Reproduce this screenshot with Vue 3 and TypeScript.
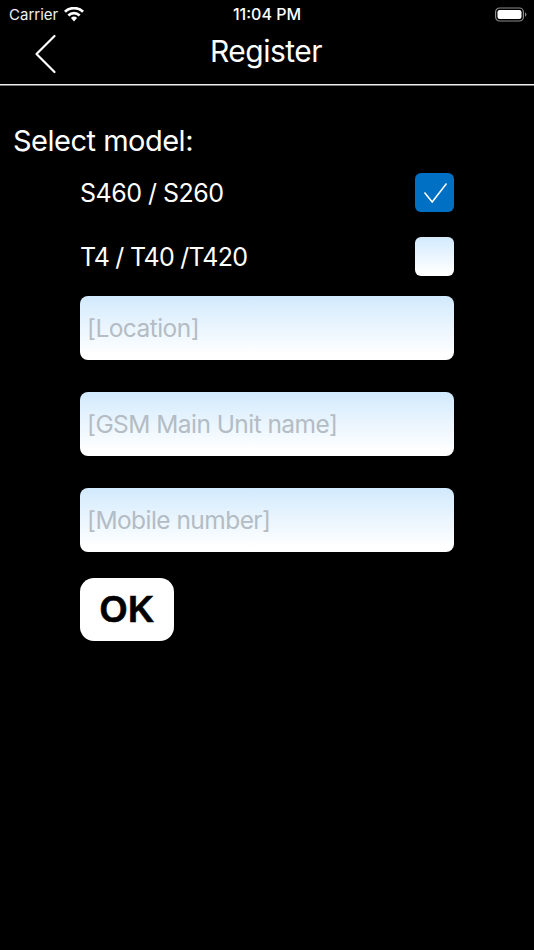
<script setup lang="ts">
const fields: string[] = ['[Location]', '[GSM Main Unit name]', '[Mobile number]']
</script>

<template>
  <div class="screen">
    <div class="status">
      <div class="status-left">
        <span class="carrier">Carrier</span>
        <svg class="wifi" width="20" height="15" viewBox="0 0 20 15">
          <path d="M10 14.4 L6.9 11 A4.6 4.6 0 0 1 13.1 11 Z" fill="#fff" />
          <path d="M5.3 9.4 L3.4 7.4 A9.6 9.6 0 0 1 16.6 7.4 L14.7 9.4 A6.9 6.9 0 0 0 5.3 9.4 Z" fill="#fff" />
          <path d="M1.9 5.8 L0 3.8 A14.4 14.4 0 0 1 20 3.8 L18.1 5.8 A11.7 11.7 0 0 0 1.9 5.8 Z" fill="#fff" />
        </svg>
      </div>
      <span class="time">11:04 PM</span>
      <svg class="battery" width="32" height="15" viewBox="0 0 32 15">
        <rect x="0.6" y="1" width="27.8" height="13" rx="4" fill="none" stroke="#8a8a8a" stroke-width="1.2" />
        <rect x="2.5" y="3" width="24" height="9" rx="2.2" fill="#fff" />
        <path d="M30 5.5 C31 5.8 31.4 6.5 31.4 7.5 C31.4 8.5 31 9.2 30 9.5 Z" fill="#8a8a8a" />
      </svg>
    </div>

    <header class="nav">
      <svg class="back" width="24" height="40" viewBox="0 0 24 40">
        <path d="M21.5 2 L3.5 20 L21.5 38" fill="none" stroke="#fff" stroke-width="2.2" stroke-linecap="round" stroke-linejoin="round" />
      </svg>
      <h1 class="title">Register</h1>
    </header>

    <main class="content">
      <p class="heading">Select model:</p>
      <div class="form">
        <div class="option first">
          <span class="label-a">S460 / S260</span>
          <span class="check checked">
            <svg width="26" height="22" viewBox="0 0 26 22">
              <path d="M2.5 10.5 L10.2 20 L24.5 1.5" fill="none" stroke="#fff" stroke-width="1.5" />
            </svg>
          </span>
        </div>
        <div class="option second">
          <span class="label-b">T4 / T40 /T420</span>
          <span class="check"></span>
        </div>
        <div class="fields">
          <div v-for="f in fields" :key="f" class="field">{{ f }}</div>
        </div>
        <button class="ok" type="button">OK</button>
      </div>
    </main>
  </div>
</template>

<style scoped>
.screen {
  width: 534px;
  height: 950px;
  background: #000;
  color: #fff;
  font-family: Inter, "Liberation Sans", sans-serif;
  overflow: hidden;
}
.status {
  height: 28px;
  padding: 0 7px 0 9px;
  display: flex;
  align-items: center;
  justify-content: space-between;
  position: relative;
  font-size: 15px;
}
.status-left {
  display: flex;
  align-items: center;
  gap: 6px;
}
.carrier {
  color: #f0f0f0;
}
.time {
  position: absolute;
  left: 0;
  right: 0;
  text-align: center;
  font-size: 16px;
  font-weight: 500;
}
.nav {
  height: 57px;
  box-sizing: border-box;
  border-bottom: 1px solid #eee;
  box-shadow: 0 1px 0 #777;
  display: flex;
  align-items: center;
  justify-content: center;
  position: relative;
}
.back {
  position: absolute;
  left: 33px;
  top: 6px;
}
.title {
  margin: 0 2px 10px 0;
  font-size: 30px;
  font-weight: 400;
  letter-spacing: -0.5px;
}
.content {
  padding-top: 38px;
}
.heading {
  margin: 0 0 0 13px;
  font-size: 29px;
  letter-spacing: -0.5px;
  line-height: 36px;
}
.form {
  width: 374px;
  margin-left: 80px;
}
.option {
  display: flex;
  align-items: center;
  justify-content: space-between;
  font-size: 25px;
  height: 39px;
}
.label-a {
  letter-spacing: -0.5px;
}
.label-b {
  letter-spacing: -0.75px;
}
.first {
  margin-top: 14px;
}
.second {
  margin-top: 25px;
}
.check {
  width: 39px;
  height: 39px;
  box-sizing: border-box;
  border-radius: 6px;
  background: linear-gradient(#d2eafd, #fff 92%);
  display: flex;
  align-items: center;
  justify-content: center;
}
.checked {
  background: #0070c4;
}
.fields {
  margin-top: 20px;
  display: flex;
  flex-direction: column;
  gap: 32px;
}
.field {
  height: 64px;
  box-sizing: border-box;
  padding-left: 7px;
  border-radius: 8px;
  background: linear-gradient(#d2eafd, #fff 92%);
  color: #b4bcc4;
  font-size: 24.5px;
  letter-spacing: -0.55px;
  line-height: 65px;
}
.ok {
  display: block;
  margin-top: 26px;
  width: 94px;
  height: 63px;
  border: 0;
  border-radius: 14px;
  background: #fff;
  color: #000;
  font-family: "Liberation Sans", Arial, sans-serif;
  font-size: 36px;
  font-weight: 700;
  letter-spacing: 0.5px;
  -webkit-text-stroke: 0.5px #000;
  padding: 0;
}
</style>
